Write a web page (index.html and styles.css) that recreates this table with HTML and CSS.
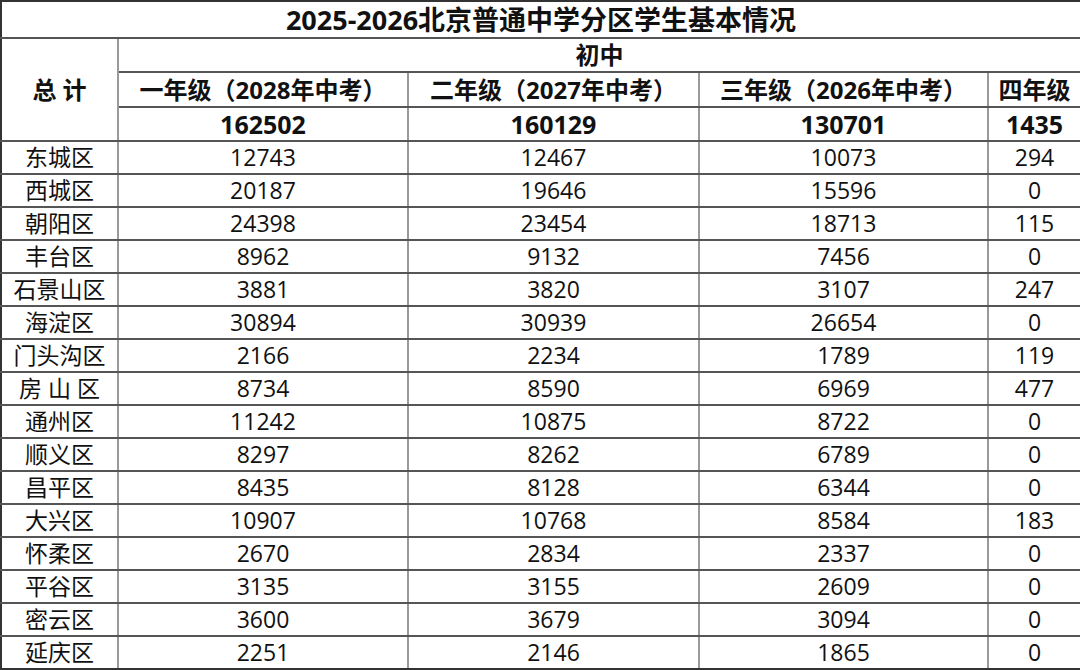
FILE: index.html
```html
<!DOCTYPE html>
<html lang="zh-CN">
<head>
<meta charset="utf-8">
<title>2025-2026北京普通中学分区学生基本情况</title>
<link rel="stylesheet" href="styles.css">
</head>
<body>
<table class="sheet">
  <colgroup>
    <col class="c-name">
    <col class="c-g1">
    <col class="c-g2">
    <col class="c-g3">
    <col class="c-g4">
  </colgroup>
  <thead>
    <tr class="r-title"><th colspan="5" class="title">2025-2026北京普通中学分区学生基本情况</th></tr>
    <tr class="r-head"><th rowspan="3" class="total-label">总 计</th><th colspan="4">初中</th></tr>
    <tr class="r-head2"><th>一年级（2028年中考）</th><th>二年级（2027年中考）</th><th>三年级（2026年中考）</th><th>四年级</th></tr>
    <tr class="r-total"><th>162502</th><th>160129</th><th>130701</th><th>1435</th></tr>
  </thead>
  <tbody>
    <tr><td>东城区</td><td>12743</td><td>12467</td><td>10073</td><td>294</td></tr>
    <tr><td>西城区</td><td>20187</td><td>19646</td><td>15596</td><td>0</td></tr>
    <tr><td>朝阳区</td><td>24398</td><td>23454</td><td>18713</td><td>115</td></tr>
    <tr><td>丰台区</td><td>8962</td><td>9132</td><td>7456</td><td>0</td></tr>
    <tr><td>石景山区</td><td>3881</td><td>3820</td><td>3107</td><td>247</td></tr>
    <tr><td>海淀区</td><td>30894</td><td>30939</td><td>26654</td><td>0</td></tr>
    <tr><td>门头沟区</td><td>2166</td><td>2234</td><td>1789</td><td>119</td></tr>
    <tr><td>房 山 区</td><td>8734</td><td>8590</td><td>6969</td><td>477</td></tr>
    <tr><td>通州区</td><td>11242</td><td>10875</td><td>8722</td><td>0</td></tr>
    <tr><td>顺义区</td><td>8297</td><td>8262</td><td>6789</td><td>0</td></tr>
    <tr><td>昌平区</td><td>8435</td><td>8128</td><td>6344</td><td>0</td></tr>
    <tr><td>大兴区</td><td>10907</td><td>10768</td><td>8584</td><td>183</td></tr>
    <tr><td>怀柔区</td><td>2670</td><td>2834</td><td>2337</td><td>0</td></tr>
    <tr><td>平谷区</td><td>3135</td><td>3155</td><td>2609</td><td>0</td></tr>
    <tr><td>密云区</td><td>3600</td><td>3679</td><td>3094</td><td>0</td></tr>
    <tr><td>延庆区</td><td>2251</td><td>2146</td><td>1865</td><td>0</td></tr>
  </tbody>
</table>
</body>
</html>
```
FILE: styles.css
```css
html, body {
  margin: 0;
  padding: 0;
  background: #ffffff;
}
body {
  font-family: "Open Sans", "Noto Sans CJK SC", sans-serif;
  color: #111111;
}
.sheet {
  width: 1080px;
  table-layout: fixed;
  border-collapse: collapse;
  border: 2px solid #333333;
}
.c-name { width: 117px; }
.c-g1 { width: 290px; }
.c-g2 { width: 291px; }
.c-g3 { width: 289px; }
.c-g4 { width: 93px; }

.sheet th,
.sheet td {
  padding: 0;
  text-align: center;
  vertical-align: middle;
  font-size: 23px;
  line-height: 1;
  white-space: nowrap;
  overflow: hidden;
  border-top: 2px solid #555555;
  border-bottom: 2px solid #555555;
  border-left: 2px solid #9a9a9a;
  border-right: 2px solid #9a9a9a;
}
.sheet th { font-weight: 700; font-size: 24px; }
.sheet td { font-weight: 400; }

.r-title th {
  height: 35px;
  font-size: 27px;
  border-left-color: #333333;
  border-right-color: #333333;
  border-top-color: #333333;
}
.r-head th { height: 32px; }
.r-head2 th { height: 33px; }
.r-total th { height: 32px; font-size: 25px; }
.sheet tbody td { height: 31px; }
.sheet tbody tr:last-child td { border-bottom-color: #333333; }
.sheet tr > :first-child { border-left-color: #333333; }
.sheet tr > :last-child { border-right-color: #333333; }
.total-label { border-left-color: #333333; }
```
